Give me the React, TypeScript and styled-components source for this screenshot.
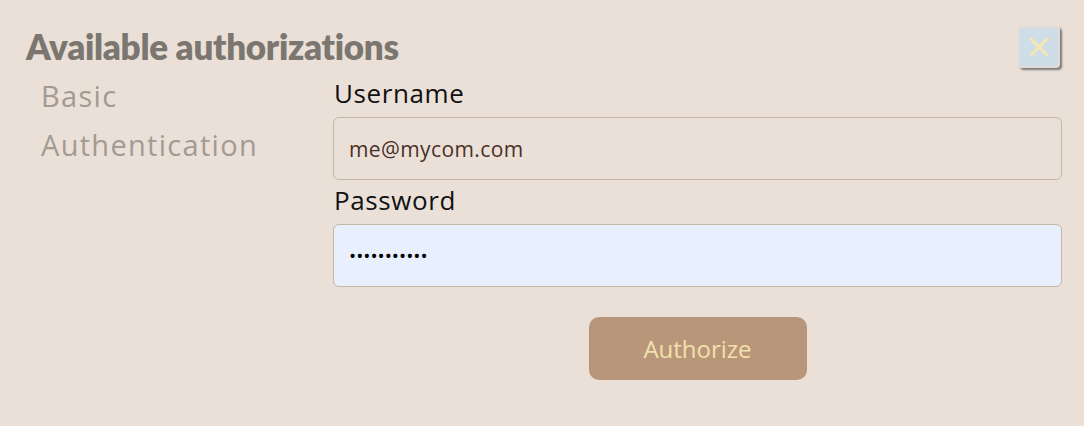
import React from "react";
import styled, { createGlobalStyle } from "styled-components";

const Global = createGlobalStyle`
  html, body { margin: 0; padding: 0; background: #eae0d8; }
  body { font-family: "Open Sans", sans-serif; }
  * { box-sizing: border-box; }
`;

const Modal = styled.div`
  width: 1084px;
  height: 426px;
  background: #eae0d8;
  padding: 22px 22px 0 26px;
`;

const Header = styled.div`
  display: flex;
  justify-content: space-between;
  align-items: flex-start;
`;

const Title = styled.h2`
  margin: 0;
  font-family: "Lato", sans-serif;
  font-weight: 800;
  font-size: 35px;
  line-height: 48px;
  color: #7b7770;
  letter-spacing: -0.3px;
`;

const CloseButton = styled.button`
  width: 42px;
  height: 42px;
  margin: 4px 2px 0 0;
  padding: 0;
  border: 2px solid #e2dcd6;
  border-radius: 4px;
  background: #cfdde9;
  box-shadow: 2px 2px 2px #7a7a7a;
  display: flex;
  align-items: center;
  justify-content: center;
`;

const Body = styled.div`
  display: grid;
  grid-template-columns: 292px 1fr;
  padding-left: 15px;
  margin-top: 3px;
`;

const Scheme = styled.div`
  font-size: 29px;
  line-height: 49px;
  letter-spacing: 1.3px;
  color: #a39a92;
  margin-top: -2px;
`;

const Form = styled.div`
  display: flex;
  flex-direction: column;
`;

const Label = styled.label`
  display: block;
  font-size: 26px;
  line-height: 36px;
  letter-spacing: 0.6px;
  color: #111;
  padding: 2px 0 6px 1px;
`;

const Input = styled.input<{ $filled?: boolean }>`
  width: 100%;
  height: 63px;
  border: 1.5px solid #c2b8a3;
  border-radius: 6px;
  background: ${(p) => (p.$filled ? "#e8f0fe" : "transparent")};
  padding: 0 15px;
  font-family: "Open Sans", sans-serif;
  font-size: ${(p) => (p.$filled ? "19px" : "21px")};
  letter-spacing: ${(p) => (p.$filled ? "0" : "0.4px")};
  color: ${(p) => (p.$filled ? "#000" : "#4a3028")};
  outline: none;
`;

const Field = styled.div`
  display: flex;
  flex-direction: column;
`;

const Actions = styled.div`
  display: flex;
  justify-content: center;
  margin-top: 30px;
`;

const AuthorizeButton = styled.button`
  width: 218px;
  height: 63px;
  border: none;
  border-radius: 10px;
  background: #b9967a;
  color: #f1e1ad;
  font-family: "Open Sans", sans-serif;
  font-size: 24px;
`;

export default function App() {
  return (
    <>
      <Global />
      <Modal>
        <Header>
          <Title>Available authorizations</Title>
          <CloseButton aria-label="Close">
            <svg width="22" height="22" viewBox="0 0 22 22">
              <path d="M3 3 L19 19 M19 3 L3 19" stroke="#f5e6b2" strokeWidth="3" strokeLinecap="round" />
            </svg>
          </CloseButton>
        </Header>
        <Body>
          <Scheme>
            Basic
            <br />
            Authentication
          </Scheme>
          <Form>
            <Field>
              <Label>Username</Label>
              <Input defaultValue="me@mycom.com" />
            </Field>
            <Field>
              <Label>Password</Label>
              <Input $filled type="password" defaultValue="mypassword1" />
            </Field>
            <Actions>
              <AuthorizeButton>Authorize</AuthorizeButton>
            </Actions>
          </Form>
        </Body>
      </Modal>
    </>
  );
}
